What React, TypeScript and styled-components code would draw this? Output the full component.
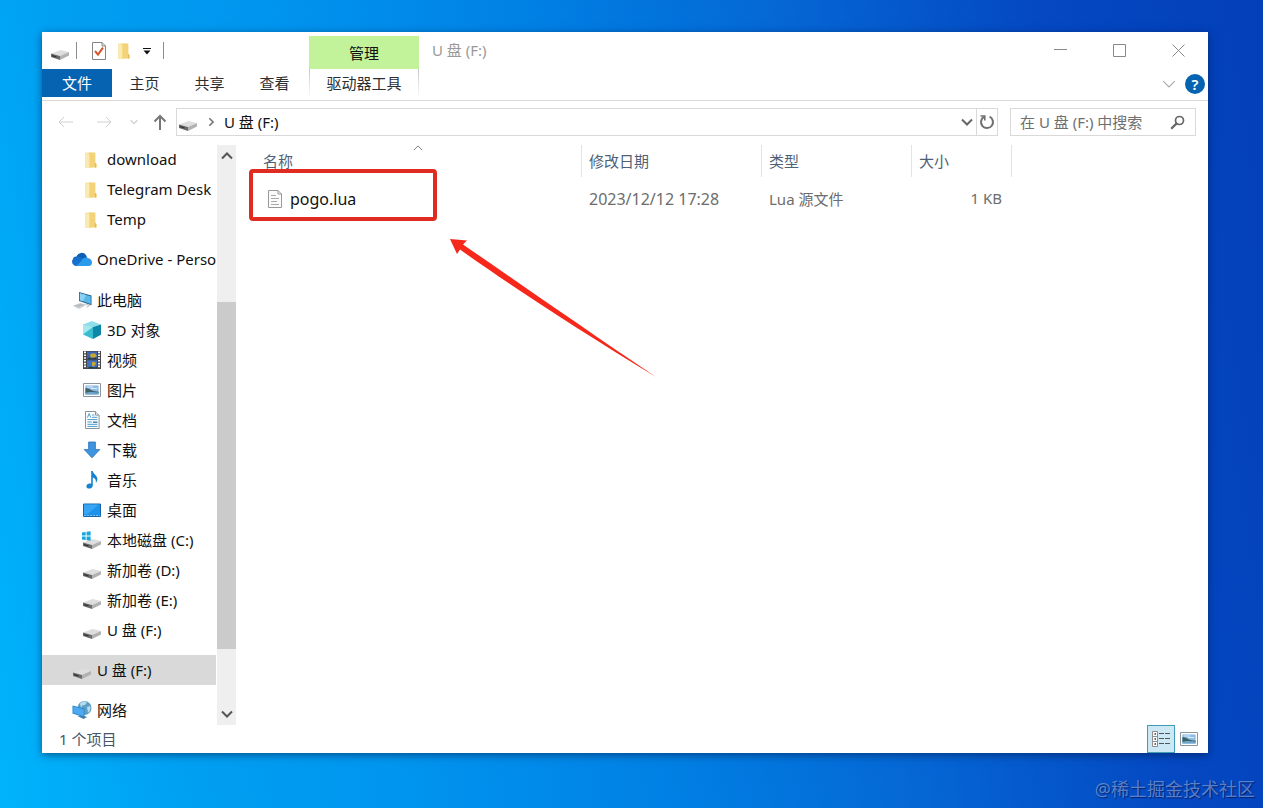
import React from "react";
import styled, { createGlobalStyle, css } from "styled-components";

const GlobalStyle = createGlobalStyle`
  *, *::before, *::after { box-sizing: border-box; }
  body {
    margin: 0;
    font-family: "Noto Sans", "Noto Sans CJK SC", sans-serif;
    font-size: 15px;
    color: #111;
  }
  button, input { font: inherit; color: inherit; }
  button { border: 0; padding: 0; background: none; }
  svg { display: block; flex: none; }
  a { color: inherit; text-decoration: none; }
  ul { list-style: none; margin: 0; padding: 0; }
`;

/* ---------- Desktop and window ---------- */

const Desktop = styled.div`
  position: relative;
  display: flex;
  min-height: 100vh;
  padding: 32px 55px 55px 42px;
  background: linear-gradient(
    80deg,
    #00b4fb 0%,
    #009ff2 14%,
    #0096ef 28%,
    #0080e4 48%,
    #0566d4 66%,
    #0448c2 84%,
    #033fb8 100%
  );
`;

const Window = styled.main`
  display: flex;
  flex: 1;
  flex-direction: column;
  min-width: 0;
  background: #fff;
  box-shadow: 0 2px 8px rgba(0, 20, 60, 0.55);
`;

const Watermark = styled.div`
  position: absolute;
  right: 8px;
  bottom: 6px;
  font-size: 18px;
  line-height: 26px;
  color: rgba(150, 175, 225, 0.6);
  text-shadow: 1px 1px 1px rgba(0, 10, 60, 0.6);
`;

/* ---------- Title bar and ribbon ---------- */

const Header = styled.header`
  display: grid;
  grid-template-columns: 267px 110px 1fr;
  grid-template-rows: 37px 31px;
  border-bottom: 1px solid #dadada;
`;

const QuickAccess = styled.div`
  display: flex;
  align-items: center;
  padding-left: 8px;
`;

const Divider = styled.span<{ $before: number; $after: number }>`
  width: 1px;
  height: 17px;
  margin: 0 ${(p) => p.$after}px 0 ${(p) => p.$before}px;
  background: #8d8d8d;
`;

const QuickButton = styled.button<{ $width: number }>`
  display: flex;
  justify-content: center;
  width: ${(p) => p.$width}px;
`;

const ContextGroup = styled.div`
  align-self: end;
  height: 33px;
  line-height: 34px;
  text-align: center;
  background: #c2f29a;
`;

const TitleArea = styled.div`
  display: flex;
  justify-content: space-between;
  min-width: 0;
`;

const Title = styled.h1`
  margin: 0;
  padding-left: 13px;
  font-size: 15px;
  font-weight: 400;
  line-height: 36px;
  color: #9a9a9a;
`;

const WindowButtons = styled.div`
  display: flex;
`;

const WindowButton = styled.button`
  display: flex;
  align-items: center;
  justify-content: center;
  width: 59px;
  height: 36px;
`;

const Tabs = styled.div`
  display: flex;
  align-items: flex-start;
`;

const Tab = styled.button<{ $primary?: boolean }>`
  width: 65px;
  height: 28px;
  line-height: 28px;
  color: #2b2f33;
  ${(p) =>
    p.$primary &&
    css`
      width: 70px;
      color: #fff;
      background: #0563b1;
    `}
`;

const ToolTab = styled.button`
  height: 28px;
  line-height: 28px;
  color: #2b2f33;
  border: solid;
  border-width: 0 1px;
  border-image: linear-gradient(#c4c4c4, #fff) 1;
`;

const RibbonEnd = styled.div`
  display: flex;
  align-items: center;
  justify-content: flex-end;
  gap: 9px;
  height: 30px;
  padding-right: 3px;
`;

const HelpButton = styled.button`
  width: 20px;
  height: 20px;
  border-radius: 50%;
  background: #0563b1;
  color: #fff;
  font-weight: 600;
  line-height: 20px;
`;

/* ---------- Address row ---------- */

const AddressRow = styled.div`
  display: flex;
  align-items: center;
  padding: 7px 12px 0 15px;
`;

const NavButton = styled.button<{ $width: number }>`
  display: flex;
  justify-content: flex-start;
  width: ${(p) => p.$width}px;
`;

const AddressBar = styled.div`
  display: flex;
  flex: 1;
  align-items: center;
  height: 28px;
  border: 1px solid #d9d9d9;
`;

const Crumbs = styled.div`
  display: flex;
  flex: 1;
  align-items: center;
  gap: 8px;
  padding-left: 1px;
  line-height: 26px;
`;

const BarButton = styled.button<{ $edge?: boolean }>`
  display: flex;
  align-items: center;
  justify-content: center;
  width: ${(p) => (p.$edge ? 21 : 18)}px;
  height: 26px;
  border-left: ${(p) => (p.$edge ? "1px solid #d9d9d9" : "0")};
`;

const SearchBox = styled.label`
  display: flex;
  align-items: center;
  width: 186px;
  height: 28px;
  margin-left: 12px;
  padding: 0 10px 0 9px;
  border: 1px solid #d9d9d9;
`;

const SearchInput = styled.input`
  flex: 1;
  min-width: 0;
  height: 26px;
  padding: 0;
  border: 0;
  outline: 0;
  background: none;
  &::placeholder {
    color: #6f6f6f;
    opacity: 1;
  }
`;

/* ---------- Body ---------- */

const Body = styled.div`
  display: flex;
  flex: 1;
  padding-top: 9px;
`;

const Sidebar = styled.nav`
  width: 174px;
`;

const TreeItem = styled.li<{ $level: 1 | 2; $selected?: boolean }>`
  margin-top: ${(p) => (p.$level === 1 ? 10 : 0)}px;
  background: ${(p) => (p.$selected ? "#d9d9d9" : "none")};
  a {
    display: flex;
    align-items: center;
    gap: 5px;
    height: 30px;
    padding-left: ${(p) => (p.$level === 1 ? 30 : 40)}px;
    white-space: nowrap;
  }
`;

const TreeLabel = styled.span`
  padding-bottom: 2px;
`;

const ScrollBar = styled.div`
  display: flex;
  flex-direction: column;
  align-self: stretch;
  width: 19px;
  margin: 0 1px;
  background: #efefef;
`;

const ScrollButton = styled.button`
  display: flex;
  align-items: center;
  justify-content: center;
  height: 22px;
`;

const ScrollSpace = styled.div<{ $share: number }>`
  flex: ${(p) => p.$share};
`;

const ScrollThumb = styled(ScrollSpace)`
  background: #cbcbcb;
`;

const FilePane = styled.section`
  position: relative;
  flex: 1;
  min-width: 0;
  padding-left: 11px;
`;

const FileTable = styled.table`
  width: 764px;
  table-layout: fixed;
  border-collapse: separate;
  border-spacing: 0;
`;

const HeadCell = styled.th<{ $width: number; $first?: boolean }>`
  position: relative;
  width: ${(p) => p.$width}px;
  height: 32px;
  padding: 0 0 2px ${(p) => (p.$first ? 15 : 7)}px;
  border-right: 1px solid #e3e3e3;
  font-weight: 400;
  text-align: left;
  color: #4f5f77;
`;

const SortMark = styled.span`
  position: absolute;
  top: -2px;
  left: 165px;
`;

const Cell = styled.td<{ $right?: boolean; $large?: boolean }>`
  height: 44px;
  padding: 0 ${(p) => (p.$right ? 10 : 0)}px ${(p) => (p.$large ? 0 : 2)}px 7px;
  font-size: ${(p) => (p.$large ? 16 : 15)}px;
  text-align: ${(p) => (p.$right ? "right" : "left")};
  color: #6d6d6d;
`;

const FileName = styled.a`
  display: flex;
  align-items: center;
  gap: 8px;
  padding-left: 13px;
  color: #111;
`;

const HighlightBox = styled.div`
  position: absolute;
  top: 24px;
  left: 12px;
  width: 188px;
  height: 52px;
  border: 4px solid #e02b20;
  border-radius: 4px;
  pointer-events: none;
`;

const PointerArrow = styled.svg`
  position: absolute;
  top: 93px;
  left: 212px;
  pointer-events: none;
`;

/* ---------- Status bar ---------- */

const StatusBar = styled.footer`
  display: flex;
  align-items: center;
  justify-content: space-between;
  height: 28px;
  padding: 0 5px 0 17px;
  color: #45566b;
`;

const StatusText = styled.span`
  padding-bottom: 2px;
`;

const ViewButtons = styled.div`
  display: flex;
`;

const ViewButton = styled.button<{ $active?: boolean }>`
  display: flex;
  align-items: center;
  justify-content: center;
  width: 28px;
  height: 28px;
  border: 1px solid ${(p) => (p.$active ? "#3f9db8" : "transparent")};
  background: ${(p) => (p.$active ? "#cce8f5" : "none")};
`;

/* ---------- Icons ---------- */

const DriveIcon = ({ windows }: { windows?: boolean }) => (
  <svg width="20" height="20" viewBox="0 0 20 20">
    <path d="M1 12.600 10.500 9l8.500 2-9 4z" fill="#dedede" />
    <path d="M1 12.600 10 14.900v4L1 16z" fill="#6b6b6b" />
    <path d="M10 14.900 19 11v3.600l-9 4.300z" fill="#b2b2b2" />
    <path d="M2 14.100l4.500 1.200v1.300l-4.500-1.300z" fill="#333" />
    {windows && (
      <path d="M0 2.600 3.700 2v3.600H0zM4.600 1.800 8.600 1.200v4.400h-4zM0 6.500h3.700v3.600L0 9.500zM4.600 6.500h4v4.300l-4-.6z" fill="#17a7e0" />
    )}
  </svg>
);

const FolderIcon = () => (
  <svg width="20" height="20" viewBox="0 0 20 20">
    <path d="M3 2.600h7v15H3z" fill="#f6dc8b" />
    <path d="M7 2.600h6.400v10.600l1.400.8v3.600H7z" fill="#f3d377" />
    <path d="M3 2.600 7.400 4v14.400L3 17.200z" fill="#fae9b0" />
    <path d="M13.400 13.200v4.400" stroke="#dcb04a" strokeWidth=".8" />
  </svg>
);

const CloudIcon = () => (
  <svg width="20" height="20" viewBox="0 0 20 20">
    <path d="M5 14.500a4 4 0 0 1-.4-8A5.400 5.400 0 0 1 14 5l1.600 4-6 5.500z" fill="#0c5fb4" />
    <path d="M3 7.700c2-1.400 4-1.100 5.700-.2l6.500 4.700-3 3.800H4.200A4.400 4.400 0 0 1 .4 10z" fill="#1470cc" />
    <path d="M9.400 10.900c.9-2.800 3.700-4.100 6.200-3 2.600.4 4.400 2 4.400 4.600A3.600 3.600 0 0 1 16.400 16H4.200z" fill="#2a9bea" />
  </svg>
);

const ComputerIcon = () => (
  <svg width="20" height="20" viewBox="0 0 20 20">
    <path d="M7 2 19.500 5.400v9.800L7 11z" fill="#2b5f88" />
    <path d="M7.900 3.200 18.700 6.200v7.900L7.900 10.300z" fill="#58b8ea" />
    <path d="M7.900 3.200 14 4.900 11 11.300l-3.100-1z" fill="#8dd2f5" />
    <path d="m.5 15.800 8-2.800 6 2-7.500 4z" fill="#cfd3d6" />
    <path d="m3 16 6.500-2M5 17l7-2.500" stroke="#99a0a5" strokeWidth=".6" />
    <path d="m13.500 14 4 1.500-3 1.800" stroke="#aaa" fill="none" strokeWidth=".8" />
  </svg>
);

const CubeIcon = () => (
  <svg width="20" height="20" viewBox="0 0 20 20">
    <path d="M10 1 19 4.400 11 7 1 4.600z" fill="#8fdfe8" />
    <path d="M1 4.600 11 7v12L1 14.600z" fill="#38bcd0" />
    <path d="M19 4.400 11 7v12l8-4.200z" fill="#0d86a8" />
    <path d="m1 4.600 10 2.400L1 14.600z" fill="#a5e9ee" />
  </svg>
);

const VideoIcon = () => (
  <svg width="20" height="20" viewBox="0 0 20 20">
    <path d="M1 1h18v18H1z" fill="#45464a" />
    <path d="M5 1.600h10v8H5z" fill="#3d64b5" />
    <path d="M5 10.400h10v8H5z" fill="#4272c4" />
    <path d="M8 5.500l1-2h4l2 2.500-2 1.500H9zM10 12h3l1 2-3 3-1-2z" fill="#c9a72c" />
    <path d="m5 9.600 2-2 3 1 4-1 1 2zM5 18.400l3-2 5 1 2-1v2z" fill="#2c3c2e" />
    <path d="M3 1.600v17M17 1.600v17" stroke="#fff" strokeWidth="2" strokeDasharray="1.600 1.200" />
  </svg>
);

const PictureIcon = () => (
  <svg width="20" height="20" viewBox="0 0 20 20">
    <path d="M1.500 3.500h17v13h-17z" fill="#fff" stroke="#8b959d" />
    <path d="M3.400 5.400h13.200v9.200H3.400z" fill="#8fbce6" />
    <path d="M3.400 8c3-.4 5.600 3.400 13.200 3.600v1.600H3.400z" fill="#3c6268" />
    <path d="M3.400 13c4-1.600 8-1 13.200-.6v2.200H3.400z" fill="#6fa6cc" />
    <path d="M5 7h6M9 8.500h6" stroke="#dcebf8" />
  </svg>
);

const DocumentIcon = () => (
  <svg width="20" height="20" viewBox="0 0 20 20">
    <path d="M3.500 1.500h10l3.600 3.600v13.400H3.500z" fill="#fff" stroke="#87929a" />
    <path d="M13.500 1.500v3.600h3.600" fill="#e4e9ec" stroke="#87929a" />
    <path d="m5.400 7.600 1.700-4 1.700 4M10 5h2.400M10 7.300h5.400M5.400 9.600h10M5.400 12h4.400M5.400 14.300h10M5.400 16.400h10" stroke="#4b9ccb" fill="none" />
    <path d="M11 11.500h4.400v1.400H11z" fill="#3579b5" />
  </svg>
);

const DownloadIcon = () => (
  <svg width="20" height="20" viewBox="0 0 20 20">
    <path d="M6.600 2h6.800v7.600h4.400L10 17.800 2.200 9.600h4.400z" fill="#3f94df" stroke="#2a72b8" strokeWidth=".8" />
  </svg>
);

const MusicIcon = () => (
  <svg width="20" height="20" viewBox="0 0 20 20">
    <path d="M9.200 1h1.600c.4 3.200 4.600 4.400 4.600 8 0 1.800-.8 3-1.600 4 .6-3-.6-4.800-3-5.600v8c0 2-1.800 3.200-3.600 3.200S4.400 17.600 4.400 16.200s1.600-2.800 3.200-2.800c.6 0 1.200.1 1.600.3z" fill="#1583d0" />
  </svg>
);

const DesktopIcon = () => (
  <svg width="20" height="20" viewBox="0 0 20 20">
    <path d="M1.500 4h17v12.500h-17z" fill="#1c93ea" stroke="#1565a8" />
    <path d="M2 4.500h15L5 14.500H2z" fill="#36a5f3" />
    <path d="M2 15.500h16" stroke="#7cbdf0" strokeDasharray="2 1" />
  </svg>
);

const NetworkIcon = () => (
  <svg width="20" height="20" viewBox="0 0 20 20">
    <circle cx="12.500" cy="8" r="7" fill="#5d9fc4" />
    <path d="M8 3.500c2-2.200 5-2.500 7-1.500l-2 3-3 .5-1 3zM15 7l3-1c1 3 0 5-2 7z" fill="#b7dcea" />
    <path d="M.5 5.500 12.500 8.600v9L.5 13.500z" fill="#2a84cd" />
    <path d="m1.300 6.600 10.400 2.700v6.900L1.300 12.700z" fill="#4eaaf0" />
    <path d="m5.500 16 6 3 3.600-2-3-1z" fill="#3d7fae" />
  </svg>
);

const CheckPageIcon = () => (
  <svg width="16" height="20" viewBox="0 0 16 20">
    <path d="M1.500 1.500h9.500l3.500 3.500v13.500h-13z" fill="#fff" stroke="#858585" />
    <path d="M11 1.500V5h3.500" fill="none" stroke="#858585" />
    <path d="m4 10 3 3.600L12 6.600" fill="none" stroke="#d5562c" strokeWidth="2" />
  </svg>
);

const FileIcon = () => (
  <svg width="14" height="18" viewBox="0 0 14 18">
    <path d="M.5.500h9.500l3.500 3.500v13.500H.5z" fill="#fcfcfc" stroke="#999" />
    <path d="M10 .500V4h3.500" fill="none" stroke="#999" />
    <path d="M3 5.500h5M3 8.500h8M3 11.500h6M3 14.500h8" stroke="#aaa" />
  </svg>
);

const chevronPaths = {
  up: "m1 8.500 5-5 5 5",
  down: "m1 3.500 5 5 5-5",
  right: "m4 1.500 4.500 4.500L4 10.500",
};

type ChevronProps = { d: keyof typeof chevronPaths; size?: number; color: string; weight?: number };

const Chevron = ({ d, size = 12, color, weight = 2 }: ChevronProps) => (
  <svg width={size} height={size} viewBox="0 0 12 12" fill="none" stroke={color} strokeWidth={weight}>
    <path d={chevronPaths[d]} />
  </svg>
);

const Arrow = ({ path, color, weight }: { path: string; color: string; weight: number }) => (
  <svg width="16" height="18" viewBox="0 0 16 18" fill="none" stroke={color} strokeWidth={weight}>
    <path d={path} />
  </svg>
);

const RefreshIcon = () => (
  <svg width="16" height="16" viewBox="0 0 16 16" fill="none" stroke="#707070" strokeWidth="2">
    <path d="M10.600 2.700A6 6 0 1 1 5 2.900" />
    <path d="M1.500 2h4.300v4.400" strokeWidth="1.600" />
  </svg>
);

const SearchIcon = () => (
  <svg width="15" height="15" viewBox="0 0 15 15" fill="none" stroke="#666">
    <circle cx="9.500" cy="5.500" r="4" strokeWidth="1.700" />
    <path d="M6.600 8.400 1.200 13.800" strokeWidth="2.200" />
  </svg>
);

const DetailsIcon = () => (
  <svg width="20" height="18" viewBox="0 0 20 18" fill="none">
    <path d="M1.500 1.500h5v5h-5zM1.500 6.500h5v5h-5zM1.500 11.500h5v5h-5z" fill="#fff" stroke="#8d8d8d" />
    <path d="M3.500 4h1.500M3.500 9h1.500M3.500 14h1.500" stroke="#333" strokeWidth="1.500" />
    <path d="M8 3.500h5M14 3.500h5M8 8.500h5M14 8.500h5M8 13.500h5M14 13.500h5" stroke="#555" />
  </svg>
);

/* ---------- Data ---------- */

type Node = { label: string; level: 1 | 2; icon: React.ReactNode; selected?: boolean };

const tree: Node[] = [
  { label: "download", level: 2, icon: <FolderIcon /> },
  { label: "Telegram Desk", level: 2, icon: <FolderIcon /> },
  { label: "Temp", level: 2, icon: <FolderIcon /> },
  { label: "OneDrive - Perso", level: 1, icon: <CloudIcon /> },
  { label: "此电脑", level: 1, icon: <ComputerIcon /> },
  { label: "3D 对象", level: 2, icon: <CubeIcon /> },
  { label: "视频", level: 2, icon: <VideoIcon /> },
  { label: "图片", level: 2, icon: <PictureIcon /> },
  { label: "文档", level: 2, icon: <DocumentIcon /> },
  { label: "下载", level: 2, icon: <DownloadIcon /> },
  { label: "音乐", level: 2, icon: <MusicIcon /> },
  { label: "桌面", level: 2, icon: <DesktopIcon /> },
  { label: "本地磁盘 (C:)", level: 2, icon: <DriveIcon windows /> },
  { label: "新加卷 (D:)", level: 2, icon: <DriveIcon /> },
  { label: "新加卷 (E:)", level: 2, icon: <DriveIcon /> },
  { label: "U 盘 (F:)", level: 2, icon: <DriveIcon /> },
  { label: "U 盘 (F:)", level: 1, icon: <DriveIcon />, selected: true },
  { label: "网络", level: 1, icon: <NetworkIcon /> },
];

export default function App() {
  return (
    <>
      <GlobalStyle />
      <Desktop>
        <Window>
          <Header>
            <QuickAccess>
              <DriveIcon />
              <Divider $before={6} $after={14} />
              <QuickButton $width={16} aria-label="属性"><CheckPageIcon /></QuickButton>
              <QuickButton $width={36} aria-label="新建文件夹"><FolderIcon /></QuickButton>
              <QuickButton $width={8} aria-label="自定义快速访问工具栏">
                <svg width="8" height="8" viewBox="0 0 8 8">
                  <path d="M0 1.500h8" stroke="#111" />
                  <path d="M.5 3.500h7L4 7.500z" fill="#111" />
                </svg>
              </QuickButton>
              <Divider $before={12} $after={0} />
            </QuickAccess>
            <ContextGroup>管理</ContextGroup>
            <TitleArea>
              <Title>U 盘 (F:)</Title>
              <WindowButtons>
                <WindowButton aria-label="最小化">
                  <svg width="13" height="13" fill="none" stroke="#888"><path d="M0 5.500h13" /></svg>
                </WindowButton>
                <WindowButton aria-label="最大化">
                  <svg width="13" height="13" fill="none" stroke="#888"><path d="M.5.500h12v12H.5z" /></svg>
                </WindowButton>
                <WindowButton aria-label="关闭">
                  <svg width="13" height="13" fill="none" stroke="#888"><path d="m.5.500 12 12M12.500.500l-12 12" /></svg>
                </WindowButton>
              </WindowButtons>
            </TitleArea>
            <Tabs>
              <Tab $primary>文件</Tab>
              <Tab>主页</Tab>
              <Tab>共享</Tab>
              <Tab>查看</Tab>
            </Tabs>
            <ToolTab>驱动器工具</ToolTab>
            <RibbonEnd>
              <button aria-label="展开功能区"><Chevron d="down" size={14} color="#aaa" weight={1} /></button>
              <HelpButton aria-label="帮助">?</HelpButton>
            </RibbonEnd>
          </Header>

          <AddressRow>
            <NavButton $width={40} aria-label="后退"><Arrow path="M16 9H2M7 4 2 9l5 5" color="#d0d0d0" weight={1} /></NavButton>
            <NavButton $width={33} aria-label="前进"><Arrow path="M0 9h14M9 4l5 5-5 5" color="#d0d0d0" weight={1} /></NavButton>
            <NavButton $width={22} aria-label="最近浏览的位置"><Chevron d="down" size={8} color="#d0d0d0" /></NavButton>
            <NavButton $width={24} aria-label="上移到"><Arrow path="M8 17V3M2.500 8.500 8 3l5.500 5.500" color="#777" weight={2} /></NavButton>
            <AddressBar>
              <Crumbs>
                <DriveIcon />
                <Chevron d="right" size={10} color="#777" />
                <span>U 盘 (F:)</span>
              </Crumbs>
              <BarButton aria-label="以前的位置"><Chevron d="down" color="#666" /></BarButton>
              <BarButton $edge aria-label="刷新"><RefreshIcon /></BarButton>
            </AddressBar>
            <SearchBox>
              <SearchInput type="text" placeholder="在 U 盘 (F:) 中搜索" aria-label="搜索" />
              <SearchIcon />
            </SearchBox>
          </AddressRow>

          <Body>
            <Sidebar>
              <ul>
                {tree.map((node, i) => (
                  <TreeItem key={i} $level={node.level} $selected={node.selected}>
                    <a href="#">
                      {node.icon}
                      <TreeLabel>{node.label}</TreeLabel>
                    </a>
                  </TreeItem>
                ))}
              </ul>
            </Sidebar>
            <ScrollBar>
              <ScrollButton aria-label="向上滚动"><Chevron d="up" color="#555" /></ScrollButton>
              <ScrollSpace $share={135} />
              <ScrollThumb $share={346} />
              <ScrollSpace $share={54} />
              <ScrollButton aria-label="向下滚动"><Chevron d="down" color="#555" /></ScrollButton>
            </ScrollBar>
            <FilePane>
              <FileTable>
                <thead>
                  <tr>
                    <HeadCell $width={334} $first>
                      名称
                      <SortMark><Chevron d="up" size={10} color="#666" weight={1} /></SortMark>
                    </HeadCell>
                    <HeadCell $width={180}>修改日期</HeadCell>
                    <HeadCell $width={150}>类型</HeadCell>
                    <HeadCell $width={100}>大小</HeadCell>
                  </tr>
                </thead>
                <tbody>
                  <tr>
                    <Cell $large><FileName href="#"><FileIcon />pogo.lua</FileName></Cell>
                    <Cell $large>2023/12/12 17:28</Cell>
                    <Cell>Lua 源文件</Cell>
                    <Cell $right>1 KB</Cell>
                  </tr>
                </tbody>
              </FileTable>
              <HighlightBox />
              <PointerArrow width="210" height="142" viewBox="0 0 210 142">
                <path d="M1 1 18 2.500 14 6.500C70 45 130 87 207 139 130 92 65 50 11 11.500L8 16z" fill="#f5281b" />
              </PointerArrow>
            </FilePane>
          </Body>

          <StatusBar>
            <StatusText>1 个项目</StatusText>
            <ViewButtons>
              <ViewButton $active aria-label="详细信息"><DetailsIcon /></ViewButton>
              <ViewButton aria-label="大图标"><PictureIcon /></ViewButton>
            </ViewButtons>
          </StatusBar>
        </Window>
        <Watermark>@稀土掘金技术社区</Watermark>
      </Desktop>
    </>
  );
}
